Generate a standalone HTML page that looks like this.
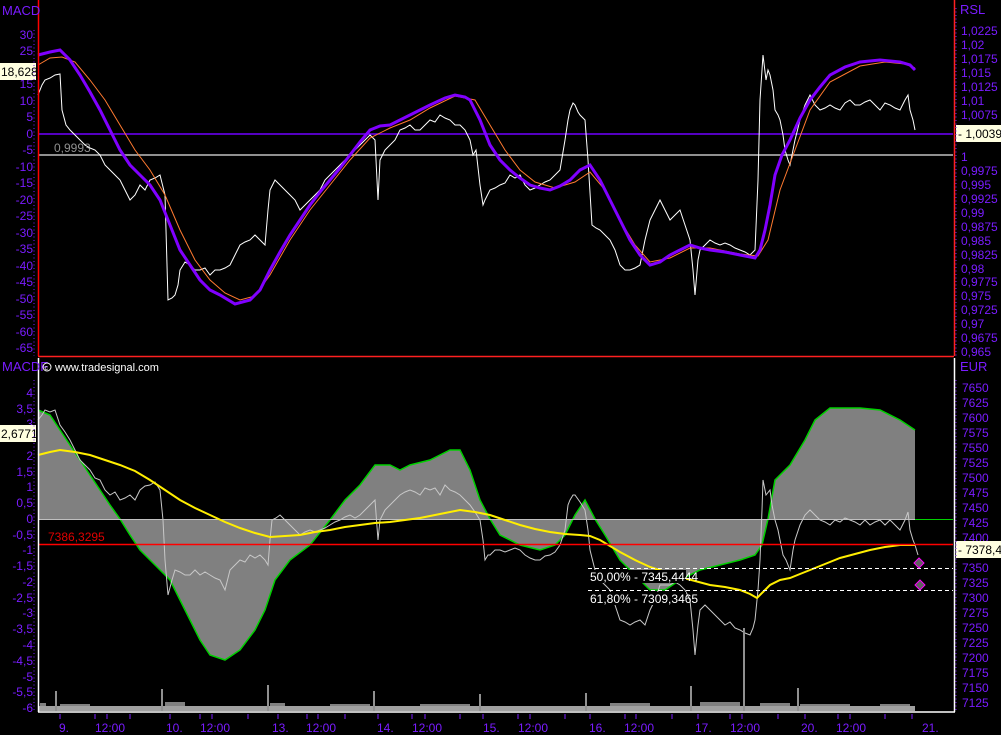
<!DOCTYPE html>
<html><head><meta charset="utf-8"><style>
html,body{margin:0;padding:0;background:#000;width:1001px;height:735px;overflow:hidden}
svg{display:block}
text{font-family:"Liberation Sans",sans-serif;font-size:12px}
.l{fill:#7a1cff;text-anchor:end}
.r{fill:#7a1cff}
</style></head><body>
<svg width="1001" height="735" viewBox="0 0 1001 735" xmlns="http://www.w3.org/2000/svg">
<rect width="1001" height="735" fill="#000"/>
<!-- TOP PANEL -->
<line x1="38" y1="134" x2="953" y2="134" stroke="#7000ff" stroke-width="1.5"/>
<line x1="38" y1="155" x2="953" y2="155" stroke="#909090" stroke-width="2"/>
<text x="54" y="152" fill="#909090">0,9993</text>
<polyline fill="none" stroke="#fff" stroke-width="1" points="38,95 42,85 45,80 50,78 55,75 60,74 62,110 66,125 70,130 75,135 80,140 85,145 90,148 95,150 100,155 105,165 110,170 115,175 120,180 125,190 130,200 135,195 140,185 145,190 150,180 155,178 160,175 165,195 168,300 172,298 175,295 178,285 180,270 185,262 190,265 195,270 200,270 205,268 210,275 215,270 220,270 225,268 230,265 235,255 240,245 245,242 250,240 255,235 260,240 265,245 268,210 270,190 275,180 280,185 285,190 290,195 295,200 300,210 305,205 310,200 315,195 320,190 325,180 330,175 335,170 340,165 345,160 350,155 355,150 360,145 365,140 370,135 375,140 378,200 380,160 385,150 390,145 395,140 400,130 405,128 410,125 415,130 420,130 425,125 430,120 435,122 440,115 445,118 450,120 455,125 460,125 465,130 470,140 473,155 476,150 480,185 483,205 485,200 490,190 495,188 500,185 505,183 510,175 515,178 520,175 525,185 530,190 535,188 540,185 545,182 550,180 555,175 560,170 565,140 568,120 570,110 573,103 575,105 578,112 580,115 585,120 588,160 592,225 596,228 600,230 605,235 610,240 615,250 620,265 625,270 630,270 635,268 640,265 645,240 650,220 655,210 660,200 665,210 670,220 675,215 680,210 685,225 690,240 693,270 695,295 698,260 700,250 705,245 710,240 715,243 720,245 725,243 730,245 735,248 740,250 745,252 750,255 755,250 758,180 760,100 763,55 766,80 768,70 770,75 773,90 775,110 778,115 780,120 783,135 785,150 788,160 790,165 795,140 800,120 805,105 810,95 815,105 820,110 825,108 830,105 835,108 840,110 845,103 850,100 855,105 860,105 865,102 870,100 875,105 880,110 885,103 890,105 895,108 900,110 905,100 908,95 910,110 913,120 915,130"/>
<polyline fill="none" stroke="#ff7a30" stroke-width="1" points="38,65 50,58 62,57 75,62 90,80 105,100 120,125 135,150 150,170 165,195 180,230 195,260 210,280 225,293 240,300 255,296 270,275 290,240 310,210 330,185 350,160 370,138 390,128 410,120 430,108 455,96 475,100 490,125 505,150 520,170 535,182 555,188 575,182 590,172 605,190 620,220 635,245 650,262 670,258 690,248 710,248 740,254 758,256 768,240 780,190 795,150 810,110 830,82 860,66 885,62 905,64 915,68"/>
<polyline fill="none" stroke="#8000ff" stroke-width="3" points="38,55 50,52 60,50 70,60 80,75 90,92 100,110 110,130 120,150 130,165 140,175 150,185 160,200 170,225 180,250 190,265 200,280 210,290 220,295 235,304 250,300 260,290 270,270 280,252 290,235 300,220 310,205 320,192 330,180 340,168 350,155 360,142 370,130 380,126 390,125 400,120 410,115 420,110 430,105 445,98 455,95 465,97 470,100 480,120 490,145 500,160 510,170 520,178 530,185 540,188 550,190 560,186 570,180 580,170 590,165 600,180 610,200 620,220 630,240 640,255 650,265 660,262 670,255 680,250 690,245 700,248 710,250 725,252 740,255 755,258 760,250 765,230 770,205 775,175 782,155 790,140 800,118 810,100 820,87 830,75 845,67 860,62 880,60 900,62 910,65 915,70"/>
<!-- top axes -->
<line x1="38.5" y1="0" x2="38.5" y2="356" stroke="#ff0000" stroke-width="1.5"/>
<line x1="38" y1="356.5" x2="954" y2="356.5" stroke="#ff2020" stroke-width="1.5"/>
<line x1="954.5" y1="0" x2="954.5" y2="356" stroke="#ff2020" stroke-width="1.5"/>
<text x="2" y="15" class="r" style="font-size:13px">MACD</text>
<text x="960" y="14" class="r" style="font-size:13px">RSL</text>
<g>
<text x="33" y="39" class="l">30</text><text x="33" y="55" class="l">25</text>
<text x="33" y="88" class="l">15</text><text x="33" y="105" class="l">10</text><text x="33" y="121" class="l">5</text>
<text x="33" y="138" class="l">0</text><text x="33" y="154" class="l">-5</text><text x="33" y="171" class="l">-10</text>
<text x="33" y="187" class="l">-15</text><text x="33" y="204" class="l">-20</text><text x="33" y="220" class="l">-25</text>
<text x="33" y="237" class="l">-30</text><text x="33" y="253" class="l">-35</text><text x="33" y="270" class="l">-40</text>
<text x="33" y="286" class="l">-45</text><text x="33" y="303" class="l">-50</text><text x="33" y="319" class="l">-55</text>
<text x="33" y="336" class="l">-60</text><text x="33" y="352" class="l">-65</text>
</g>
<rect x="0" y="63" width="36" height="17" fill="#ffffe0"/>
<text x="1" y="76" fill="#000">18,628</text>
<g>
<text x="961" y="35" class="r">1,0225</text><text x="961" y="49" class="r">1,02</text><text x="961" y="63" class="r">1,0175</text>
<text x="961" y="77" class="r">1,015</text><text x="961" y="91" class="r">1,0125</text><text x="961" y="105" class="r">1,01</text>
<text x="961" y="119" class="r">1,0075</text><text x="961" y="161" class="r">1</text>
<text x="961" y="175" class="r">0,9975</text><text x="961" y="189" class="r">0,995</text><text x="961" y="203" class="r">0,9925</text>
<text x="961" y="217" class="r">0,99</text><text x="961" y="231" class="r">0,9875</text><text x="961" y="245" class="r">0,985</text>
<text x="961" y="259" class="r">0,9825</text><text x="961" y="273" class="r">0,98</text><text x="961" y="286" class="r">0,9775</text>
<text x="961" y="300" class="r">0,975</text><text x="961" y="314" class="r">0,9725</text><text x="961" y="328" class="r">0,97</text>
<text x="961" y="342" class="r">0,9675</text><text x="961" y="356" class="r">0,965</text>
</g>
<rect x="956" y="125" width="45" height="17" fill="#ffffe0"/>
<text x="958" y="138" fill="#000">- 1,0039</text>
<!-- BOTTOM PANEL -->
<polygon fill="#808080" stroke="none" points="38,519 38,410 50,415 60,430 70,445 80,460 90,475 100,490 110,505 120,519 130,535 140,550 150,560 160,570 170,580 180,600 190,620 200,640 210,655 225,660 240,650 255,630 265,610 275,580 290,560 310,545 330,520 345,500 360,485 375,465 390,465 400,470 410,465 430,460 450,450 460,450 470,470 480,500 490,519 500,535 520,545 540,550 555,545 565,535 575,515 585,500 595,519 605,535 620,560 640,580 650,590 665,590 680,580 700,570 720,565 740,560 755,555 762,545 768,519 775,480 790,465 805,440 815,420 830,408 860,408 880,410 900,420 915,430 915,519"/>
<polyline fill="none" stroke="#00d000" stroke-width="1.5" points="38,410 50,415 60,430 70,445 80,460 90,475 100,490 110,505 120,519 130,535 140,550 150,560 160,570 170,580 180,600 190,620 200,640 210,655 225,660 240,650 255,630 265,610 275,580 290,560 310,545 330,520 345,500 360,485 375,465 390,465 400,470 410,465 430,460 450,450 460,450 470,470 480,500 490,519 500,535 520,545 540,550 555,545 565,535 575,515 585,500 595,519 605,535 620,560 640,580 650,590 665,590 680,580 700,570 720,565 740,560 755,555 762,545 768,519 775,480 790,465 805,440 815,420 830,408 860,408 880,410 900,420 915,430"/>
<line x1="38" y1="519.5" x2="915" y2="519.5" stroke="#c0c0c0" stroke-width="1"/>
<line x1="915" y1="519.5" x2="953" y2="519.5" stroke="#00d000" stroke-width="1"/>
<polyline fill="none" stroke="#c8c8c8" stroke-width="1" points="38,420 42,415 45,410 50,412 55,410 60,425 65,432 70,440 75,450 80,460 85,465 90,470 95,478 100,480 105,490 110,495 115,492 120,500 125,498 130,495 135,500 140,490 145,486 150,485 155,482 160,490 163,520 165,560 168,595 172,580 175,570 180,572 185,575 190,575 195,570 200,575 205,572 210,575 215,578 220,580 225,590 230,570 235,565 240,560 245,562 250,555 255,558 260,555 265,560 268,565 270,540 272,520 276,518 280,515 285,520 290,525 295,530 300,535 305,532 310,530 315,532 320,530 325,528 330,525 335,522 340,520 345,517 350,515 355,518 360,515 365,510 370,505 375,500 378,540 380,520 385,510 390,505 395,500 400,495 405,492 410,490 415,492 420,495 425,488 430,490 435,488 440,495 445,485 450,490 455,492 460,495 465,500 470,505 475,512 480,520 483,540 485,560 488,555 490,555 495,550 500,550 505,552 510,550 515,548 520,550 525,555 530,558 535,560 540,560 545,556 550,555 555,552 560,545 565,530 568,505 570,500 573,495 575,495 580,502 585,510 588,530 590,550 595,570 600,580 605,585 610,590 615,605 620,620 625,622 630,625 635,622 640,620 645,625 650,610 655,600 660,585 665,585 670,585 675,582 680,585 685,590 690,600 693,630 695,655 698,625 700,610 705,605 710,610 715,615 720,620 725,625 730,622 735,628 740,630 745,633 750,635 753,628 755,620 758,590 760,560 762,510 763,480 766,495 770,490 772,505 775,520 778,530 780,540 783,555 786,560 790,570 793,550 795,540 800,525 805,515 810,510 815,515 820,520 825,522 830,525 835,520 840,522 845,518 850,520 855,522 860,525 865,520 870,525 875,522 880,520 885,525 890,520 895,525 900,530 905,520 908,512 910,530 913,540 915,545 918,555"/>
<polyline fill="none" stroke="#ffee00" stroke-width="2" points="38,455 50,452 60,450 75,452 90,455 105,460 120,465 135,471 150,480 165,490 180,500 195,508 210,515 225,522 240,528 255,533 270,537 285,536 300,535 315,532 330,530 345,527 360,525 375,523 390,522 405,520 420,518 440,514 460,510 475,512 490,515 505,520 520,525 535,529 550,532 565,534 580,535 590,536 600,540 610,546 620,552 635,560 650,567 665,572 680,577 695,581 710,585 725,587 740,590 750,594 757,598 763,592 770,585 780,580 790,578 800,574 810,570 825,564 840,558 855,554 870,550 885,547 900,545 915,545"/>
<line x1="38" y1="544.5" x2="953" y2="544.5" stroke="#ff0000" stroke-width="1.5"/>
<text x="48" y="541" fill="#e00000">7386,3295</text>
<line x1="588" y1="568.5" x2="953" y2="568.5" stroke="#fff" stroke-width="1" stroke-dasharray="4,3"/>
<line x1="588" y1="590.5" x2="953" y2="590.5" stroke="#fff" stroke-width="1" stroke-dasharray="4,3"/>
<rect x="588" y="570" width="98" height="13" fill="#000"/>
<text x="590" y="581" fill="#fff">50,00% - 7345,4444</text>
<rect x="588" y="592" width="98" height="13" fill="#000"/>
<text x="590" y="603" fill="#fff">61,80% - 7309,3465</text>
<polygon points="919,558 924,563 919,568 914,563" fill="#606060" stroke="#ff00ff" stroke-width="1"/>
<polygon points="920,580 925,585 920,590 915,585" fill="#606060" stroke="#ff00ff" stroke-width="1"/>
<!-- volume -->
<g fill="#909090">
<rect x="38" y="706" width="877" height="5" fill="#a0a0a0"/>
<path d="M40 703h6v3h-6zM60 704h30v2h-30zM165 702h20v4h-20zM270 703h15v3h-15zM330 704h40v2h-40zM420 704h50v2h-50zM610 703h40v3h-40zM700 702h40v4h-40zM760 703h30v3h-30zM800 704h50v2h-50zM880 704h30v2h-30z" fill="#808080"/>
<rect x="55" y="691" width="2" height="20"/><rect x="161" y="689" width="2" height="22"/><rect x="267" y="685" width="2" height="26"/>
<rect x="373" y="691" width="2" height="20"/><rect x="479" y="694" width="2" height="17"/><rect x="585" y="693" width="2" height="18"/>
<rect x="690" y="686" width="2" height="25"/><rect x="743" y="628" width="2" height="83"/><rect x="797" y="688" width="2" height="23"/>
</g>
<!-- bottom axes -->
<line x1="38.5" y1="358" x2="38.5" y2="712" stroke="#fff" stroke-width="1.5"/>
<line x1="954.5" y1="358" x2="954.5" y2="712" stroke="#fff" stroke-width="1.5"/>
<line x1="38" y1="712" x2="955" y2="712" stroke="#fff" stroke-width="1.5"/>
<text x="2" y="371" class="r" style="font-size:13px">MACDF</text>
<circle cx="47" cy="367" r="4" fill="none" stroke="#fff"/><text x="44.5" y="370" fill="#fff" style="font-size:7px">c</text>
<text x="55" y="371" fill="#fff" style="font-size:11px">www.tradesignal.com</text>
<text x="960" y="371" class="r" style="font-size:13px">EUR</text>
<g>
<text x="33" y="397" class="l">4</text><text x="33" y="413" class="l">3,5</text><text x="33" y="428" class="l">3</text>
<text x="33" y="460" class="l">2</text><text x="33" y="476" class="l">1,5</text><text x="33" y="491" class="l">1</text>
<text x="33" y="507" class="l">0,5</text><text x="33" y="523" class="l">0</text><text x="33" y="539" class="l">-0,5</text>
<text x="33" y="554" class="l">-1</text><text x="33" y="570" class="l">-1,5</text><text x="33" y="586" class="l">-2</text>
<text x="33" y="602" class="l">-2,5</text><text x="33" y="617" class="l">-3</text><text x="33" y="633" class="l">-3,5</text>
<text x="33" y="649" class="l">-4</text><text x="33" y="665" class="l">-4,5</text><text x="33" y="681" class="l">-5</text>
<text x="33" y="696" class="l">-5,5</text><text x="33" y="712" class="l">-6</text>
</g>
<rect x="0" y="425" width="36" height="17" fill="#ffffe0"/>
<text x="1" y="438" fill="#000">2,6771</text>
<g>
<text x="962" y="392" class="r">7650</text><text x="962" y="407" class="r">7625</text><text x="962" y="422" class="r">7600</text>
<text x="962" y="437" class="r">7575</text><text x="962" y="452" class="r">7550</text><text x="962" y="467" class="r">7525</text>
<text x="962" y="482" class="r">7500</text><text x="962" y="497" class="r">7475</text><text x="962" y="512" class="r">7450</text>
<text x="962" y="527" class="r">7425</text><text x="962" y="542" class="r">7400</text><text x="962" y="572" class="r">7350</text>
<text x="962" y="587" class="r">7325</text><text x="962" y="602" class="r">7300</text><text x="962" y="617" class="r">7275</text>
<text x="962" y="632" class="r">7250</text><text x="962" y="647" class="r">7225</text><text x="962" y="662" class="r">7200</text>
<text x="962" y="677" class="r">7175</text><text x="962" y="692" class="r">7150</text><text x="962" y="707" class="r">7125</text>
</g>
<rect x="956" y="541" width="45" height="17" fill="#ffffe0"/>
<text x="958" y="554" fill="#000">- 7378,42</text>
<g stroke="#7a1cff" stroke-width="1">
<path d="M956 8V356M956 380V712" stroke-dasharray="1,2.5"/>
<path d="M34 30V356M34 380V712" stroke-dasharray="1,2.5"/>
</g>
<g stroke="#7a1cff">
<path d="M60 714v5M95 714v5M107 714v5M130 714v5M170 714v5M200 714v5M212 714v5M248 714v5M278 714v5M307 714v5M318 714v5M345 714v5M378 714v5M412 714v5M425 714v5M460 714v5M483 714v5M518 714v5M530 714v5M565 714v5M590 714v5M625 714v5M636 714v5M672 714v5M698 714v5M730 714v5M742 714v5M778 714v5M805 714v5M838 714v5M850 714v5M885 714v5M912 714v5"/>
</g>
<g>
<text x="59" y="732" class="r">9.</text><text x="95" y="732" class="r">12:00</text>
<text x="166" y="732" class="r">10.</text><text x="200" y="732" class="r">12:00</text>
<text x="272" y="732" class="r">13.</text><text x="306" y="732" class="r">12:00</text>
<text x="377" y="732" class="r">14.</text><text x="412" y="732" class="r">12:00</text>
<text x="483" y="732" class="r">15.</text><text x="518" y="732" class="r">12:00</text>
<text x="589" y="732" class="r">16.</text><text x="624" y="732" class="r">12:00</text>
<text x="695" y="732" class="r">17.</text><text x="730" y="732" class="r">12:00</text>
<text x="801" y="732" class="r">20.</text><text x="836" y="732" class="r">12:00</text>
<text x="922" y="732" class="r">21.</text>
</g>
</svg>
</body></html>
